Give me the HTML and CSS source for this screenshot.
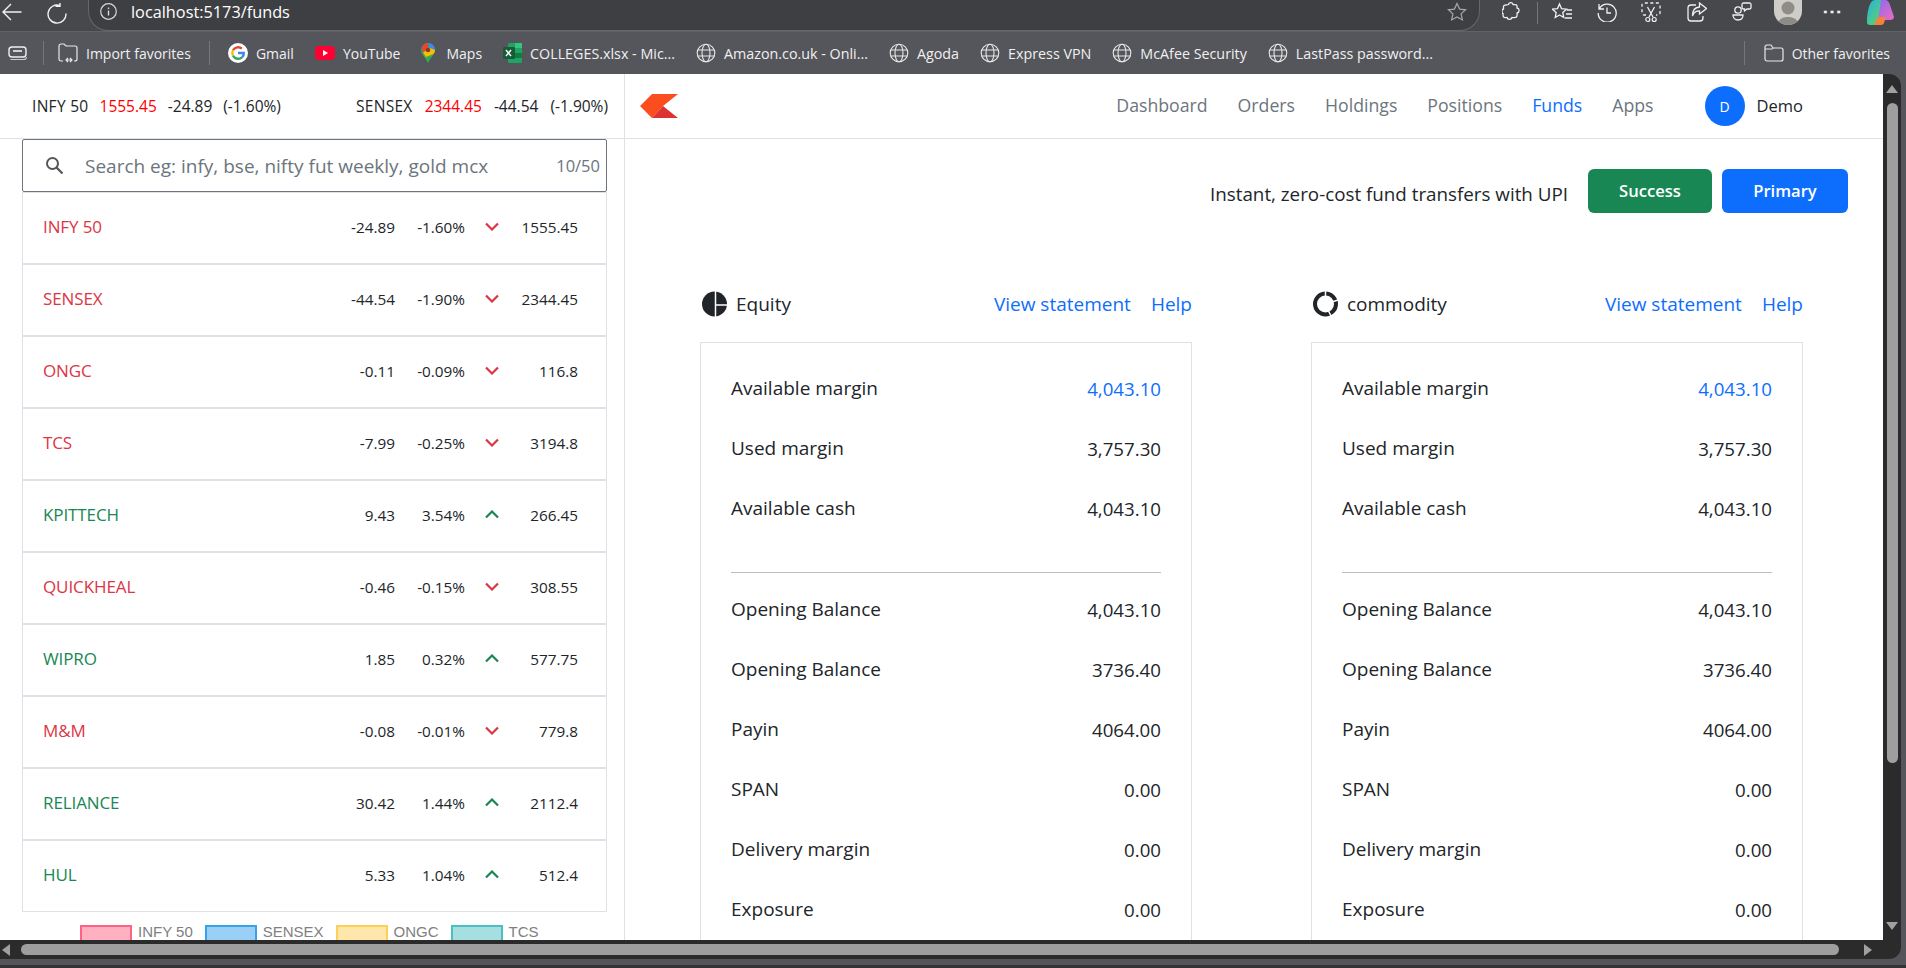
FILE: index.html
```html
<!DOCTYPE html>
<html>
	<head>
		<title>Funds</title>
		<link rel="stylesheet" href="styles.css">
	</head>
	<body>
		<svg class="defs" width="0" height="0">
			<symbol id="globe" viewBox="0 0 20 20">
				<g fill="none" stroke="#e8e8e8" stroke-width="1.1">
					<circle cx="10" cy="10" r="8.8"/>
					<ellipse cx="10" cy="10" rx="4" ry="8.8"/>
					<path d="M2 7h16M2 13h16"/>
				</g>
			</symbol>
		</svg>
		<div class="browser">
			<!-- browser toolbar -->
			<div class="toolbar">
				<svg class="tb-back" width="20" height="18" viewBox="0 0 20 18"><path d="M19.5 9H1M9 1 1 9l8 8" fill="none" stroke="#f0f0f0" stroke-width="1.4"/></svg>
				<svg class="tb-reload" width="20" height="21" viewBox="0 0 20 21"><path d="M13 2.6A9 9 0 1 0 19 10.5M13 -1v4.4H8.500" fill="none" stroke="#f0f0f0" stroke-width="1.4"/></svg>
				<div class="urlbar">
					<svg width="17" height="17" viewBox="0 0 17 17"><circle cx="8.500" cy="8.500" r="7.800" fill="none" stroke="#d8d8d8" stroke-width="1.200"/><path d="M8.500 7.500v5M8.500 4.500v1.500" stroke="#d8d8d8" stroke-width="1.400"/></svg>
					<span class="url">localhost:5173/funds</span>
					<svg class="url-star" width="20" height="20" viewBox="0 0 20 20"><path d="M10 1.500l2.600 5.600 6 .7-4.500 4.100 1.300 6L10 14.900l-5.400 3 1.300-6L1.400 7.800l6-.7z" fill="none" stroke="#a8a8a8" stroke-width="1.200"/></svg>
				</div>
				<svg class="tb-ext" width="19" height="20" viewBox="0 0 19 20"><path d="M6.500 2.500c.5-2.500 4-2.500 4.500 0 0 .5 2.500-.5 3.500.5 1 1 .5 2.500.5 3 2.800.5 2.800 4.500 0 5 0 1 .5 3-.5 4-1 1-3.500.5-4.500.5-.5 2.500-4.500 2.500-5 0-1 0-2.500.5-3.500-.5-.7-.7-.3-2.500-.5-3.500C-.5 11 -.5 7.500 1.500 7c.2-1-.5-2.500.5-3.500 1-1 3.500-.5 4.500-1z" fill="none" stroke="#f0f0f0" stroke-width="1.300"/></svg>
				<span class="tb-sep"></span>
				<svg class="tb-favs" width="21" height="20" viewBox="0 0 21 20"><path d="M7.500 2l2 4.600 5 .6-3.700 3.300 1 5-4.300-2.500-4.300 2.500 1-5L.5 7.200l5-.6zM15 8h5M14 12h6M13 16h7" fill="none" stroke="#f0f0f0" stroke-width="1.300"/></svg>
				<svg class="tb-hist" width="20" height="21" viewBox="0 0 20 21"><path d="M2 3v5h5M2.200 8a9 9 0 1 1-1 4M10 6.500V12h4" fill="none" stroke="#f0f0f0" stroke-width="1.300"/></svg>
				<svg class="tb-snip" width="20" height="21" viewBox="0 0 20 21"><path d="M5 13H3a2 2 0 0 1-2-2V3a2 2 0 0 1 2-2h14a2 2 0 0 1 2 2v8a2 2 0 0 1-2 2h-2" fill="none" stroke="#f0f0f0" stroke-width="1.300" stroke-dasharray="3 2.500"/><path d="M6.500 5l5.500 10M13.500 5L8 15" fill="none" stroke="#f0f0f0" stroke-width="1.300"/><circle cx="6.800" cy="17.500" r="2" fill="none" stroke="#f0f0f0" stroke-width="1.200"/><circle cx="13.200" cy="17.500" r="2" fill="none" stroke="#f0f0f0" stroke-width="1.200"/></svg>
				<svg class="tb-share" width="20" height="20" viewBox="0 0 20 20"><path d="M9 3H4a3 3 0 0 0-3 3v10a3 3 0 0 0 3 3h9a3 3 0 0 0 3-3v-2M12.500 1l7 5.500-7 5.500V8.800C9 8.800 6.500 10 5.500 14c0-6 3-8.800 7-9z" fill="none" stroke="#f0f0f0" stroke-width="1.300"/></svg>
				<svg class="tb-feed" width="20" height="21" viewBox="0 0 20 21"><circle cx="6" cy="9" r="3.200" fill="none" stroke="#f0f0f0" stroke-width="1.300"/><path d="M1 14h10c0 3-2 5-5 5s-5-2-5-5zM11 2h7a1.500 1.500 0 0 1 1 1.500v3A1.500 1.500 0 0 1 18 8h-3l-2.500 2V8H11a1.500 1.500 0 0 1-1-1.500v-3A1.500 1.500 0 0 1 11 2z" fill="none" stroke="#f0f0f0" stroke-width="1.300"/></svg>
				<div class="tb-avatar"><svg width="28" height="25" viewBox="0 0 28 25"><circle cx="14" cy="8" r="6.500" fill="#8f8c87"/><path d="M3 25c1-6 6-8 11-8s10 2 11 8z" fill="#8f8c87"/></svg></div>
				<span class="tb-dots">&#8943;</span>
				<svg class="tb-copilot" width="27" height="25" viewBox="0 0 27 25">
					<defs>
						<linearGradient id="cpa" x1="0" y1="0" x2="1" y2="1"><stop offset="0" stop-color="#1fb5e8"/><stop offset="1" stop-color="#6fd64a"/></linearGradient>
						<linearGradient id="cpb" x1="0" y1="0" x2="1" y2="1"><stop offset="0" stop-color="#8a6bf0"/><stop offset="1" stop-color="#f06bc0"/></linearGradient>
					</defs>
					<path d="M8 0h9L13 17c-1 5-3 8-7 8H3c-2 0-3-1-3-3 0-8 2-22 8-22z" fill="url(#cpa)"/>
					<path d="M14 0h4c3 0 4 2 5 5l4 12c0 2-2 3-4 3H11z" fill="url(#cpb)"/>
					<path d="M7 25l4-8h8l-2 6c-.5 1-1.500 2-3 2z" fill="#f5813a"/>
				</svg>
			</div>

			<!-- favorites bar -->
			<div class="favbar">
				<svg class="fav-tabs" width="20" height="18" viewBox="0 0 20 18"><rect x="1" y="3" width="17" height="10" rx="3" fill="none" stroke="#f0f0f0" stroke-width="1.400"/><path d="M5 7h9" stroke="#f0f0f0" stroke-width="1.600"/><path d="M2.500 15.500h13c1.500 0 3-1 3-2.500" fill="none" stroke="#c8c8c8" stroke-width="1.200"/></svg>
				<span class="fav-sep first"></span>
				<div class="fav-item import">
					<svg width="20" height="20" viewBox="0 0 20 20"><path d="M5 18H3a2 2 0 0 1-2-2V3a2 2 0 0 1 2-2h3l2 2h9a2 2 0 0 1 2 2v11a2 2 0 0 1-2 2h-1M8 17h6M10 15l-2 2 2 2M12 15l2 2-2 2" fill="none" stroke="#e8e8e8" stroke-width="1.200"/></svg>
					<span>Import favorites</span>
				</div>
				<span class="fav-sep second"></span>
				<div class="fav-item">
					<svg width="20" height="20" viewBox="0 0 20 20">
						<circle cx="10" cy="10" r="10" fill="#fff"/>
						<path d="M5 7.300a5.800 5.800 0 0 1 8.900-1.600" fill="none" stroke="#ea4335" stroke-width="2.400"/>
						<path d="M5 12.700a5.800 5.800 0 0 1 0-5.400" fill="none" stroke="#fbbc05" stroke-width="2.400"/>
						<path d="M5 12.700a5.800 5.800 0 0 0 9 1.600" fill="none" stroke="#34a853" stroke-width="2.400"/>
						<path d="M14 14.300c1.300-1.200 1.900-2.700 1.800-4.300H10" fill="none" stroke="#4285f4" stroke-width="2.400"/>
					</svg>
					<span>Gmail</span>
				</div>
				<div class="fav-item">
					<svg width="20" height="20" viewBox="0 0 20 20"><rect y="3" width="20" height="14" rx="4" fill="#ff0033"/><path d="M8 7l5 3-5 3z" fill="#fff"/></svg>
					<span>YouTube</span>
				</div>
				<div class="fav-item maps">
					<svg width="14" height="20" viewBox="0 0 14 20"><path d="M7 0a7 7 0 0 1 7 7c0 4-4 7-7 13C4 14 0 11 0 7a7 7 0 0 1 7-7z" fill="#34a853"/><path d="M2 2.200A7 7 0 0 1 7 0v5L2 9.500A7 7 0 0 1 2 2.200z" fill="#ea4335"/><path d="M7 0a7 7 0 0 1 7 7L9 5z" fill="#4285f4"/><path d="M2 9.500L9 5l5 2c0 1.500-.7 2.800-1.500 4L5 14z" fill="#fbbc05"/><circle cx="7" cy="7" r="2.300" fill="#8a3a2a"/></svg>
					<span>Maps</span>
				</div>
				<div class="fav-item wide">
					<svg width="19" height="20" viewBox="0 0 19 20"><rect x="5" width="14" height="20" rx="1.500" fill="#21a366"/><rect x="12" width="7" height="5" fill="#33c481"/><rect x="5" y="10" width="14" height="5" fill="#107c41"/><rect y="4" width="12" height="12" rx="1" fill="#185c37"/><path d="M3 7l5 6M8 7l-5 6" stroke="#fff" stroke-width="1.500"/></svg>
					<span>COLLEGES.xlsx - Mic...</span>
				</div>
				<div class="fav-item wide"><svg width="20" height="20"><use href="#globe"/></svg><span>Amazon.co.uk - Onli...</span></div>
				<div class="fav-item wide"><svg width="20" height="20"><use href="#globe"/></svg><span>Agoda</span></div>
				<div class="fav-item wide"><svg width="20" height="20"><use href="#globe"/></svg><span>Express VPN</span></div>
				<div class="fav-item wide"><svg width="20" height="20"><use href="#globe"/></svg><span>McAfee Security</span></div>
				<div class="fav-item wide"><svg width="20" height="20"><use href="#globe"/></svg><span>LastPass password...</span></div>
				<span class="fav-sep third"></span>
				<div class="fav-item other">
					<svg width="20" height="18" viewBox="0 0 20 18"><path d="M1 3a2 2 0 0 1 2-2h4l2 3h8a2 2 0 0 1 2 2v9a2 2 0 0 1-2 2H3a2 2 0 0 1-2-2zM1 5h7l1.500-1" fill="none" stroke="#e8e8e8" stroke-width="1.200"/></svg>
					<span>Other favorites</span>
				</div>
			</div>

			<div class="viewport">
				<div class="page">
					<!-- watchlist -->
					<div class="watchlist">
						<div class="index-bar">
							<div class="index">
								<span class="index-name">INFY 50</span><span class="red">1555.45</span><span>-24.89</span><span>(-1.60%)</span>
							</div>
							<div class="index sensex">
								<span class="index-name">SENSEX</span><span class="red">2344.45</span><span>-44.54</span><span>(-1.90%)</span>
							</div>
						</div>
						<div class="search">
							<svg width="19" height="19" viewBox="0 0 19 19"><circle cx="7.500" cy="7.500" r="5.500" fill="none" stroke="#555" stroke-width="2"/><path d="M11.500 11.500l6 6" stroke="#555" stroke-width="2.200"/></svg>
							<span class="placeholder">Search eg: infy, bse, nifty fut weekly, gold mcx</span>
							<span class="count">10/50</span>
						</div>
						<div class="rows">
							<div class="row down"><span class="name">INFY 50</span><span class="chg">-24.89</span><span class="pct">-1.60%</span><svg class="chev" width="14" height="9" viewBox="0 0 14 9"><path d="M1 1.500l6 6 6-6" fill="none" stroke="currentColor" stroke-width="2.200"/></svg><span class="price">1555.45</span></div>
							<div class="row down"><span class="name">SENSEX</span><span class="chg">-44.54</span><span class="pct">-1.90%</span><svg class="chev" width="14" height="9" viewBox="0 0 14 9"><path d="M1 1.500l6 6 6-6" fill="none" stroke="currentColor" stroke-width="2.200"/></svg><span class="price">2344.45</span></div>
							<div class="row down"><span class="name">ONGC</span><span class="chg">-0.11</span><span class="pct">-0.09%</span><svg class="chev" width="14" height="9" viewBox="0 0 14 9"><path d="M1 1.500l6 6 6-6" fill="none" stroke="currentColor" stroke-width="2.200"/></svg><span class="price">116.8</span></div>
							<div class="row down"><span class="name">TCS</span><span class="chg">-7.99</span><span class="pct">-0.25%</span><svg class="chev" width="14" height="9" viewBox="0 0 14 9"><path d="M1 1.500l6 6 6-6" fill="none" stroke="currentColor" stroke-width="2.200"/></svg><span class="price">3194.8</span></div>
							<div class="row up"><span class="name">KPITTECH</span><span class="chg">9.43</span><span class="pct">3.54%</span><svg class="chev" width="14" height="9" viewBox="0 0 14 9"><path d="M1 7.500l6-6 6 6" fill="none" stroke="currentColor" stroke-width="2.200"/></svg><span class="price">266.45</span></div>
							<div class="row down"><span class="name">QUICKHEAL</span><span class="chg">-0.46</span><span class="pct">-0.15%</span><svg class="chev" width="14" height="9" viewBox="0 0 14 9"><path d="M1 1.500l6 6 6-6" fill="none" stroke="currentColor" stroke-width="2.200"/></svg><span class="price">308.55</span></div>
							<div class="row up"><span class="name">WIPRO</span><span class="chg">1.85</span><span class="pct">0.32%</span><svg class="chev" width="14" height="9" viewBox="0 0 14 9"><path d="M1 7.500l6-6 6 6" fill="none" stroke="currentColor" stroke-width="2.200"/></svg><span class="price">577.75</span></div>
							<div class="row down"><span class="name">M&amp;M</span><span class="chg">-0.08</span><span class="pct">-0.01%</span><svg class="chev" width="14" height="9" viewBox="0 0 14 9"><path d="M1 1.500l6 6 6-6" fill="none" stroke="currentColor" stroke-width="2.200"/></svg><span class="price">779.8</span></div>
							<div class="row up"><span class="name">RELIANCE</span><span class="chg">30.42</span><span class="pct">1.44%</span><svg class="chev" width="14" height="9" viewBox="0 0 14 9"><path d="M1 7.500l6-6 6 6" fill="none" stroke="currentColor" stroke-width="2.200"/></svg><span class="price">2112.4</span></div>
							<div class="row up"><span class="name">HUL</span><span class="chg">5.33</span><span class="pct">1.04%</span><svg class="chev" width="14" height="9" viewBox="0 0 14 9"><path d="M1 7.500l6-6 6 6" fill="none" stroke="currentColor" stroke-width="2.200"/></svg><span class="price">512.4</span></div>
						</div>
						<div class="legend">
							<span class="swatch pink"></span><span class="legend-label">INFY 50</span>
							<span class="swatch blue"></span><span class="legend-label">SENSEX</span>
							<span class="swatch yellow"></span><span class="legend-label">ONGC</span>
							<span class="swatch teal"></span><span class="legend-label">TCS</span>
						</div>
					</div>

					<!-- main content -->
					<div class="main">
						<div class="topnav">
							<svg class="logo" width="38" height="24" viewBox="0 0 38 24"><path d="M12 0h26L23 12 12 24 0 12z" fill="#fb4d1d"/><path d="M12 24l11-12 15 12z" fill="#dc3432"/></svg>
							<a class="nav-link">Dashboard</a>
							<a class="nav-link">Orders</a>
							<a class="nav-link">Holdings</a>
							<a class="nav-link">Positions</a>
							<a class="nav-link active">Funds</a>
							<a class="nav-link">Apps</a>
							<div class="avatar">D</div>
							<span class="username">Demo</span>
						</div>
						<div class="upi">
							<span class="upi-text">Instant, zero-cost fund transfers with UPI</span>
							<button class="btn green">Success</button>
							<button class="btn blue">Primary</button>
						</div>
						<div class="columns">
							<div class="col">
								<div class="col-head">
									<svg width="25" height="26" viewBox="0 0 25 26"><circle cx="12.500" cy="13" r="12.500" fill="#212529"/><path d="M13.500 0v26M13.500 14H25" stroke="#fff" stroke-width="1.500"/></svg>
									<span class="col-title">Equity</span>
									<a class="link first">View statement</a>
									<a class="link">Help</a>
								</div>
								<div class="box">
									<div class="line"><span>Available margin</span><span class="value link">4,043.10</span></div>
									<div class="line"><span>Used margin</span><span class="value">3,757.30</span></div>
									<div class="line"><span>Available cash</span><span class="value">4,043.10</span></div>
									<hr class="divider">
									<div class="line"><span>Opening Balance</span><span class="value">4,043.10</span></div>
									<div class="line"><span>Opening Balance</span><span class="value">3736.40</span></div>
									<div class="line"><span>Payin</span><span class="value">4064.00</span></div>
									<div class="line"><span>SPAN</span><span class="value">0.00</span></div>
									<div class="line"><span>Delivery margin</span><span class="value">0.00</span></div>
									<div class="line"><span>Exposure</span><span class="value">0.00</span></div>
								</div>
							</div>
							<div class="col">
								<div class="col-head">
									<svg width="25" height="26" viewBox="0 0 25 26"><circle cx="12.500" cy="13" r="10.500" fill="none" stroke="#212529" stroke-width="4"/><path d="M12.500 0v6M25 9l-6 2M18 25l-3-6" stroke="#fff" stroke-width="1.500"/></svg>
									<span class="col-title">commodity</span>
									<a class="link first">View statement</a>
									<a class="link">Help</a>
								</div>
								<div class="box">
									<div class="line"><span>Available margin</span><span class="value link">4,043.10</span></div>
									<div class="line"><span>Used margin</span><span class="value">3,757.30</span></div>
									<div class="line"><span>Available cash</span><span class="value">4,043.10</span></div>
									<hr class="divider">
									<div class="line"><span>Opening Balance</span><span class="value">4,043.10</span></div>
									<div class="line"><span>Opening Balance</span><span class="value">3736.40</span></div>
									<div class="line"><span>Payin</span><span class="value">4064.00</span></div>
									<div class="line"><span>SPAN</span><span class="value">0.00</span></div>
									<div class="line"><span>Delivery margin</span><span class="value">0.00</span></div>
									<div class="line"><span>Exposure</span><span class="value">0.00</span></div>
								</div>
							</div>
						</div>
					</div>
				</div>
				<div class="vscroll">
					<span class="arrow-up"></span>
					<span class="vthumb"></span>
					<span class="arrow-down"></span>
				</div>
			</div>
			<div class="hscroll">
				<span class="arrow-left"></span>
				<span class="hthumb"></span>
				<span class="arrow-right"></span>
			</div>
			<div class="bottom-edge"></div>
		</div>
	</body>
</html>
```

FILE: styles.css
```css
* {
	box-sizing: border-box;
}
html, body {
	margin: 0;
	height: 100%;
	overflow: hidden;
}
body {
	font-family: "Open Sans", "Noto Sans", sans-serif;
	color: #212529;
}
.defs {
	display: block;
	height: 0;
}
.browser {
	width: 1906px;
	height: 968px;
	display: flex;
	flex-direction: column;
	background-color: #55565b;
}

/* browser toolbar */
.toolbar {
	height: 32px;
	flex: none;
	display: flex;
	align-items: flex-start;
	padding-left: 2px;
	background-color: #47484c;
	border-bottom: 1px solid #616266;
}
.tb-back {
	margin: 3px 25px 0 0;
}
.tb-reload {
	margin: 3px 21px 0 0;
}
.urlbar {
	width: 1392px;
	height: 31px;
	margin-right: 22px;
	display: flex;
	align-items: center;
	padding: 0 12px 7px 11px;
	background-color: #3e3f43;
	border: 1px solid #66676b;
	border-top: 0;
	border-radius: 0 0 20px 20px;
}
.url {
	margin-left: 14px;
	font-size: 16.3px;
	color: #fff;
}
.url-star {
	margin-left: auto;
}
.tb-ext {
	margin: 2px 16px 0 0;
}
.tb-sep {
	width: 1px;
	height: 22px;
	margin: 2px 14px 0 0;
	background-color: #75767a;
}
.tb-favs {
	margin: 2px 24px 0 0;
}
.tb-hist {
	margin: 1px 24px 0 0;
}
.tb-snip {
	margin: 2px 26px 0 0;
}
.tb-share {
	margin: 2px 25px 0 0;
}
.tb-feed {
	margin: 1px 22px 0 0;
}
.tb-avatar {
	width: 28px;
	height: 25px;
	margin-right: 20px;
	border-radius: 0 0 14px 14px;
	background-color: #cfcdc9;
	overflow: hidden;
}
.tb-dots {
	width: 24px;
	margin-right: 21px;
	font-size: 20px;
	line-height: 22px;
	font-weight: bold;
	color: #f0f0f0;
}
.favbar {
	height: 42px;
	flex: none;
	display: flex;
	align-items: center;
	padding-left: 8px;
	background-color: #55565b;
}
.fav-sep {
	width: 1px;
	height: 24px;
	background-color: #75767a;
}
.fav-sep.first {
	margin: 0 14px 0 15px;
}
.fav-sep.second {
	margin: 0 18px 0 18px;
}
.fav-sep.third {
	margin-left: auto;
	margin-right: 19px;
}
.fav-item {
	display: flex;
	align-items: center;
	gap: 8px;
	margin-right: 21px;
	font-size: 14px;
	color: #f0f0f0;
	white-space: nowrap;
}
.fav-item.wide {
	font-size: 14.3px;
}
.fav-item.maps {
	gap: 11px;
}
.fav-item.import {
	margin-right: 0;
}
.fav-item.other {
	margin-right: 16px;
}

/* viewport and scrollbars */
.viewport {
	height: 866px;
	flex: none;
	display: flex;
}
.page {
	width: 1883px;
	height: 866px;
	display: flex;
	overflow: hidden;
	background-color: #fff;
}
.vscroll {
	width: 18px;
	display: flex;
	flex-direction: column;
	align-items: center;
	background-color: #2b2b2b;
	border-radius: 0 12px 0 0;
}
.arrow-up {
	margin-top: 11px;
	border: 6px solid transparent;
	border-top: 0;
	border-bottom: 8px solid #a0a0a0;
}
.vthumb {
	width: 11px;
	height: 660px;
	margin-top: 10px;
	border-radius: 6px;
	background-color: #9e9e9e;
}
.arrow-down {
	margin-top: auto;
	margin-bottom: 10px;
	border: 6px solid transparent;
	border-bottom: 0;
	border-top: 8px solid #a0a0a0;
}
.hscroll {
	width: 1901px;
	height: 19px;
	flex: none;
	display: flex;
	align-items: center;
	background-color: #2b2b2b;
	border-radius: 0 0 12px 0;
}
.arrow-left {
	margin-left: 2px;
	border: 6px solid transparent;
	border-left: 0;
	border-right: 8px solid #a0a0a0;
}
.hthumb {
	width: 1818px;
	height: 11px;
	margin-left: 11px;
	border-radius: 6px;
	background-color: #9e9e9e;
}
.arrow-right {
	margin-left: 25px;
	border: 6px solid transparent;
	border-right: 0;
	border-left: 8px solid #a0a0a0;
}
.bottom-edge {
	flex: 1;
	margin-top: 6px;
	background-color: #333;
}

/* watchlist */
.watchlist {
	width: 625px;
	height: 866px;
	flex: none;
	border-right: 1px solid #dee2e6;
}
.index-bar {
	height: 65px;
	display: flex;
	align-items: center;
	justify-content: space-between;
	padding: 0 16px 0 32px;
	border-bottom: 1px solid #dee2e6;
}
.index {
	display: flex;
	gap: 11px;
	font-size: 15.5px;
	white-space: nowrap;
}
.index.sensex {
	gap: 12px;
}
.index-name {
	letter-spacing: 0.3px;
}
.red {
	color: #f00;
}
.search {
	width: 585px;
	height: 53px;
	margin-left: 22px;
	display: flex;
	align-items: center;
	padding: 0 6px 0 22px;
	border: 1px solid #6c757d;
	border-radius: 2px;
	font-size: 19px;
	color: #6c757d;
}
.placeholder {
	margin-left: 21px;
}
.count {
	margin-left: auto;
	font-size: 16.5px;
}
.rows {
	width: 585px;
	margin-left: 22px;
}
.row {
	height: 72px;
	display: flex;
	align-items: center;
	padding: 0 28px 3px 20px;
	border: 1px solid #dee2e6;
	font-size: 15.3px;
}
.row .name {
	flex: 1;
	font-size: 17px;
	letter-spacing: -0.1px;
}
.row.down .name,
.row.down .chev {
	color: #dc3545;
}
.row.up .name,
.row.up .chev {
	color: #198754;
}
.row .chg {
	width: 70px;
	text-align: right;
}
.row .pct {
	width: 70px;
	text-align: right;
}
.row .chev {
	margin-left: 20px;
}
.row .price {
	width: 79px;
	text-align: right;
}
.legend {
	height: 15px;
	display: flex;
	align-items: flex-start;
	margin-top: 13px;
	padding-left: 80px;
	font-family: "Liberation Sans", sans-serif;
	font-size: 15px;
	line-height: 15px;
	color: #808080;
}
.swatch {
	width: 52px;
	height: 15px;
	margin-right: 6px;
	border: 2px solid;
	border-bottom: 0;
}
.legend-label {
	margin-top: -1px;
	margin-right: 12px;
}
.swatch.pink {
	background-color: #ffb1c1;
	border-color: #ff6384;
}
.swatch.blue {
	background-color: #9ad0f5;
	border-color: #36a2eb;
}
.swatch.yellow {
	background-color: #ffe6aa;
	border-color: #ffce56;
}
.swatch.teal {
	background-color: #a5dfdf;
	border-color: #4bc0c0;
}

/* main */
.main {
	flex: 1;
	min-width: 0;
}
.topnav {
	height: 65px;
	display: flex;
	align-items: center;
	padding: 0 80px 0 15px;
	border-bottom: 1px solid #dee2e6;
}
.logo {
	margin-right: auto;
}
.nav-link {
	margin-right: 30px;
	padding-bottom: 2px;
	font-size: 17.7px;
	color: #6c757d;
}
.nav-link.active {
	color: #0d6efd;
}
.avatar {
	width: 40px;
	height: 40px;
	margin-left: 21px;
	display: flex;
	align-items: center;
	justify-content: center;
	border-radius: 50%;
	background-color: #0d6efd;
	color: #fff;
	font-size: 14px;
}
.username {
	margin-left: 12px;
	padding-bottom: 2px;
	font-size: 16.5px;
}
.upi {
	height: 44px;
	margin-top: 30px;
	display: flex;
	align-items: center;
	justify-content: flex-end;
	padding-right: 35px;
	font-size: 18.8px;
}
.upi-text {
	padding-top: 6px;
}
.btn {
	height: 44px;
	margin-left: 10px;
	padding-bottom: 3px;
	border: 0;
	border-radius: 6px;
	color: #fff;
	font-family: inherit;
	font-size: 16.6px;
	font-weight: 600;
}
.btn.green {
	width: 124px;
	margin-left: 20px;
	background-color: #198754;
}
.btn.blue {
	width: 126px;
	background-color: #0d6efd;
}
.columns {
	display: flex;
	gap: 119px;
	margin-top: 66px;
	padding-left: 75px;
}
.col {
	width: 492px;
	flex: none;
}
.col-head {
	height: 63px;
	display: flex;
	align-items: center;
	padding: 0 0 13px 2px;
	font-size: 19px;
}
.col-title {
	margin-left: 9px;
}
.link {
	color: #0d6efd;
}
.col-head .link {
	margin-left: 20px;
}
.col-head .link.first {
	margin-left: auto;
}
.box {
	padding: 15px 30px 20px;
	border: 1px solid #dee2e6;
	font-size: 19px;
}
.line {
	height: 60px;
	display: flex;
	align-items: center;
	justify-content: space-between;
}
.value {
	font-size: 18.7px;
}
.divider {
	margin: 34px 0 6px;
	border: 0;
	border-top: 1px solid #bdbdbd;
}
```
